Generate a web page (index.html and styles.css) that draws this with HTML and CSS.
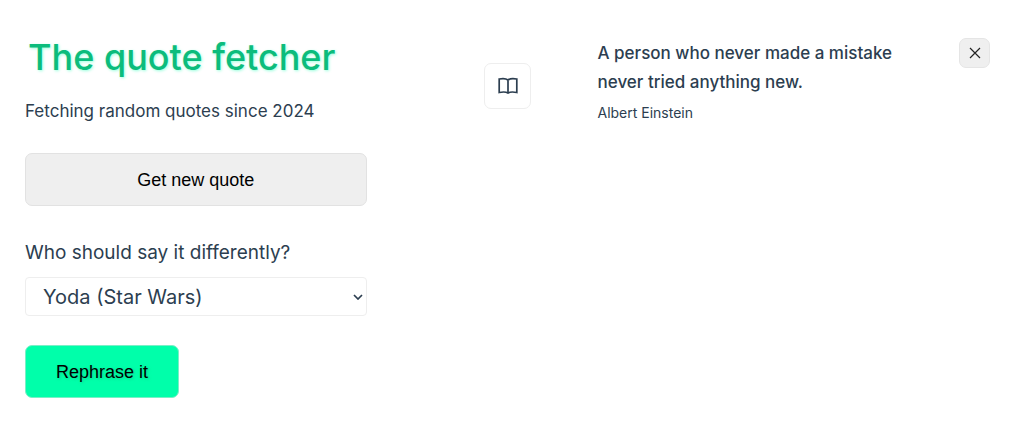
FILE: index.html
```
<!DOCTYPE html>
<html lang="en">
<head>
    <meta charset="UTF-8">
    <meta name="viewport" content="width=device-width, initial-scale=1.0">
    <title>The quote fetcher</title>
    <link rel="stylesheet" href="styles.css">
</head>
<body>
    <main class="container">
        <section class="controls">
            <h1>The quote fetcher</h1>
            <p class="tagline">Fetching random quotes since 2024</p>
            <button type="button" class="btn btn-fetch">Get new quote</button>
            <form class="rephrase">
                <label for="character">Who should say it differently?</label>
                <div class="select-wrap">
                    <select id="character" name="character">
                        <option selected>Yoda (Star Wars)</option>
                    </select>
                    <svg class="chevron" width="10" height="6" viewBox="0 0 10 6" aria-hidden="true">
                        <path d="M1 1l4 4 4-4"/>
                    </svg>
                </div>
                <button type="button" class="btn btn-rephrase">Rephrase it</button>
            </form>
        </section>
        <div class="middle">
            <button type="button" class="btn-book" aria-label="Saved quotes">
                <svg width="20" height="18" viewBox="0 0 20 18" aria-hidden="true">
                    <path d="M10 3C8.200 1.600 4.500 1.300 1.200 2v13.500c3.500-.7 7-.6 8.800.6 1.800-1.200 5.300-1.300 8.800-.6V2C15.500 1.300 11.800 1.600 10 3zM10 3v13"/>
                </svg>
            </button>
        </div>
        <section class="quotes">
            <figure class="quote">
                <blockquote>A person who never made a mistake never tried anything new.</blockquote>
                <figcaption>Albert Einstein</figcaption>
            </figure>
            <button type="button" class="btn-close" aria-label="Remove quote">
                <svg width="12" height="12" viewBox="0 0 12 12" aria-hidden="true">
                    <path d="M1 1l10 10M11 1L1 11"/>
                </svg>
            </button>
        </section>
    </main>
</body>
</html>
```
FILE: styles.css
```
* {
    box-sizing: border-box;
}
body {
    margin: 0;
    font-family: Inter, "Liberation Sans", sans-serif;
    color: #2c3e50;
    background-color: #fff;
}
.container {
    display: grid;
    grid-template-columns: 1fr 180px 1fr;
    padding: 24px 28px 24px 25px;
}
.controls {
    display: flex;
    flex-direction: column;
    padding-right: 51px;
}
h1 {
    margin: 8px 0 0 3px;
    font-size: 36px;
    font-weight: 500;
    line-height: 50px;
    white-space: nowrap;
    color: #0cbc7c;
    text-shadow: 1px 1px 3px rgba(0, 255, 170, 0.4);
}
.tagline {
    margin: 16px 0 29px;
    font-size: 17px;
    line-height: 26px;
}
button {
    cursor: pointer;
}
.btn {
    height: 53px;
    padding: 1px 30px 0;
    font-family: "Liberation Sans", Arial, sans-serif;
    font-size: 18px;
    color: #000;
    border: 1px solid #e2e2e2;
    border-radius: 7px;
}
.btn-fetch {
    background-color: #efefef;
}
.rephrase {
    display: flex;
    flex-direction: column;
    align-items: flex-start;
    margin-top: 32px;
}
label {
    font-size: 19px;
    line-height: 30px;
}
.select-wrap {
    position: relative;
    width: 100%;
    margin: 9px 0 29px;
}
select {
    display: block;
    width: 100%;
    height: 39px;
    padding: 0 17px;
    font-family: inherit;
    font-size: 20px;
    color: inherit;
    background-color: #fff;
    border: 1px solid #eee;
    border-radius: 4px;
    appearance: none;
}
.chevron {
    position: absolute;
    right: 4px;
    top: 17px;
    pointer-events: none;
}
svg path {
    fill: none;
    stroke: #2c3e50;
    stroke-width: 1.7;
}
.btn-rephrase {
    background-color: #00ffaa;
    border-color: #7aefc6;
    text-shadow: 1px 1px 3px rgba(12, 188, 124, 0.6);
}
.middle {
    display: flex;
    justify-content: center;
    align-items: flex-start;
    padding-top: 39px;
}
.btn-book {
    display: flex;
    justify-content: center;
    align-items: center;
    width: 47px;
    height: 46px;
    padding: 0;
    background-color: #fff;
    border: 1px solid #eee;
    border-radius: 7px;
}
.quotes {
    display: flex;
    justify-content: space-between;
    align-items: flex-start;
    padding-top: 14px;
}
.quote {
    flex: 1;
    max-width: 320px;
    margin: 0;
}
blockquote {
    margin: 1px 0 0;
    font-size: 17px;
    font-weight: 500;
    line-height: 29px;
}
figcaption {
    margin-top: 6px;
    font-size: 14px;
    line-height: 20px;
}
.btn-close {
    display: flex;
    justify-content: center;
    align-items: center;
    width: 31px;
    height: 30px;
    padding: 0;
    background-color: #efefef;
    border: 1px solid #e5e5e5;
    border-radius: 7px;
}
.btn-close path {
    stroke: #222;
    stroke-width: 1.2;
}
```
